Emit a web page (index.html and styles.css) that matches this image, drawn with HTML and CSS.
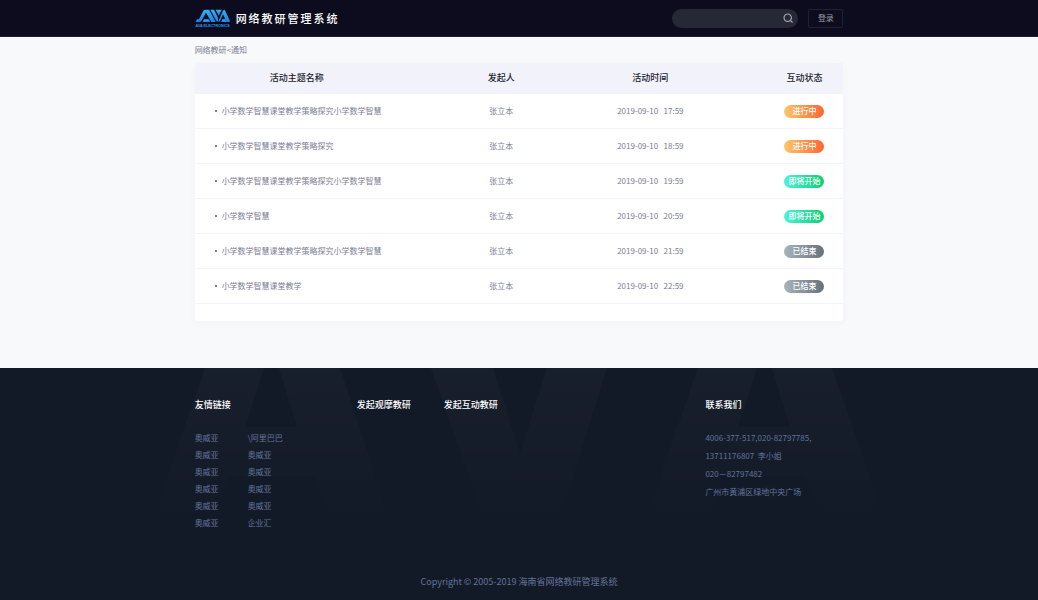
FILE: index.html
```html
<!DOCTYPE html>
<html lang="zh-CN">
<head>
  <meta charset="UTF-8">
  <meta name="viewport" content="width=device-width, initial-scale=1.0">
  <title>网络教研管理系统</title>
  <link rel="stylesheet" href="styles.css">
</head>
<body>
  <header class="header">
    <div class="container header-inner">
      <a class="brand" href="#">
        <svg class="logo" viewBox="0 0 105 57" role="img" aria-label="AVA">
          <defs>
            <linearGradient id="logoFill" x1="0" y1="0" x2="0" y2="1">
              <stop offset="0" stop-color="#2fb4f5"/>
              <stop offset="1" stop-color="#1a7fe8"/>
            </linearGradient>
          </defs>
          <g fill="url(#logoFill)">
            <path d="M2 39L6 31H12L25 5Q27 2 31 2H42L62 39H49L33 11L19 36Q17 39 13 39Z"/>
            <path d="M27 31H41L45 39H23Z"/>
            <path d="M46 2H57L69 26V34L66 39Z"/>
            <path d="M62 2H80L71 20Z"/>
            <path d="M69 39L84 5Q86 2 89 2L104 34V39H95L84 16L75 36Q73 39 69 39Z"/>
            <path d="M82 31H91L95 39H79Z"/>
          </g>
          <text class="logo-text" x="53" y="54" text-anchor="middle">AVA ELECTRONICS</text>
        </svg>
        <span class="brand-name">网络教研管理系统</span>
      </a>
      <form class="search" role="search">
        <input type="search" class="search-input" aria-label="搜索">
        <button type="button" class="search-btn" aria-label="搜索">
          <svg viewBox="0 0 10 10" width="10" height="10" fill="none" stroke="#a3a4b0" stroke-width="1.2">
            <circle cx="4.7" cy="4.7" r="3.7"/>
            <path d="M7.3 7.3L9.5 9.5"/>
          </svg>
        </button>
      </form>
      <button type="button" class="login-btn">登录</button>
    </div>
  </header>

  <main class="container main">
    <nav class="breadcrumb"><a href="#">网络教研</a>&lt;<a href="#">通知</a></nav>

    <div class="card">
      <table class="table">
        <thead>
          <tr>
            <th class="col-name">活动主题名称</th>
            <th class="col-user">发起人</th>
            <th class="col-time">活动时间</th>
            <th class="col-status">互动状态</th>
          </tr>
        </thead>
        <tbody>
          <tr>
            <td class="name">小学数学智慧课堂教学策略探究小学数学智慧</td>
            <td>张立本</td>
            <td class="time">2019-09-10   17:59</td>
            <td><span class="badge badge-doing">进行中</span></td>
          </tr>
          <tr>
            <td class="name">小学数学智慧课堂教学策略探究</td>
            <td>张立本</td>
            <td class="time">2019-09-10   18:59</td>
            <td><span class="badge badge-doing">进行中</span></td>
          </tr>
          <tr>
            <td class="name">小学数学智慧课堂教学策略探究小学数学智慧</td>
            <td>张立本</td>
            <td class="time">2019-09-10   19:59</td>
            <td><span class="badge badge-soon">即将开始</span></td>
          </tr>
          <tr>
            <td class="name">小学数学智慧</td>
            <td>张立本</td>
            <td class="time">2019-09-10   20:59</td>
            <td><span class="badge badge-soon">即将开始</span></td>
          </tr>
          <tr>
            <td class="name">小学数学智慧课堂教学策略探究小学数学智慧</td>
            <td>张立本</td>
            <td class="time">2019-09-10   21:59</td>
            <td><span class="badge badge-end">已结束</span></td>
          </tr>
          <tr>
            <td class="name">小学数学智慧课堂教学</td>
            <td>张立本</td>
            <td class="time">2019-09-10   22:59</td>
            <td><span class="badge badge-end">已结束</span></td>
          </tr>
        </tbody>
      </table>
    </div>
  </main>

  <footer class="footer">
    <!-- 页脚背景水印 -->
    <svg class="watermark" viewBox="0 0 1038 140" aria-hidden="true">
      <defs>
        <linearGradient id="fade" gradientUnits="userSpaceOnUse" x1="0" y1="0" x2="0" y2="140">
          <stop offset="0" stop-color="#fff" stop-opacity="0.024"/>
          <stop offset="1" stop-color="#fff" stop-opacity="0.002"/>
        </linearGradient>
      </defs>
      <g fill="url(#fade)">
        <path d="M205 0H264L245 59H297L279 0H340L385 139H325L314 108H229L218 139H157Z"/>
        <path d="M431 0H493L520 86L547 0H607L563 139H480Z"/>
        <path d="M698 0H757L738 59H790L772 0H832L880 139H818L806 108H723L712 139H650Z"/>
      </g>
    </svg>
    <div class="container footer-cols">
      <section>
        <h2 class="footer-title">友情链接</h2>
        <div class="links">
          <ul>
            <li><a href="#">奥威亚</a></li>
            <li><a href="#">奥威亚</a></li>
            <li><a href="#">奥威亚</a></li>
            <li><a href="#">奥威亚</a></li>
            <li><a href="#">奥威亚</a></li>
            <li><a href="#">奥威亚</a></li>
          </ul>
          <ul>
            <li><a href="#">\阿里巴巴</a></li>
            <li><a href="#">奥威亚</a></li>
            <li><a href="#">奥威亚</a></li>
            <li><a href="#">奥威亚</a></li>
            <li><a href="#">奥威亚</a></li>
            <li><a href="#">企业汇</a></li>
          </ul>
        </div>
      </section>
      <section>
        <h2 class="footer-title">发起观摩教研</h2>
      </section>
      <section>
        <h2 class="footer-title">发起互动教研</h2>
      </section>
      <section>
        <h2 class="footer-title">联系我们</h2>
        <address class="contact">
          <p>4006-377-517,020-82797785,</p>
          <p>13711176807&nbsp; 李小姐</p>
          <p>020－82797482</p>
          <p>广州市黄浦区绿地中央广场</p>
        </address>
      </section>
    </div>
    <p class="copyright">Copyright © 2005-2019 海南省网络教研管理系统</p>
  </footer>
</body>
</html>
```

FILE: styles.css
```css
* {
  box-sizing: border-box;
}
body {
  margin: 0;
  min-height: 100vh;
  display: flex;
  flex-direction: column;
  font-family: "Noto Sans CJK SC", sans-serif;
  font-size: 8px;
  line-height: 12px;
  color: #7b7c92;
  background: #f7f9fb;
}
a {
  color: inherit;
  text-decoration: none;
}
h2, p, ul {
  margin: 0;
  padding: 0;
}
ul {
  list-style: none;
}
button, input {
  font: inherit;
}
.container {
  width: 62.5%;
  margin: 0 auto;
}

/* 顶部 */
.header {
  background: #0c0c1e;
  border-bottom: 1px solid #1e2033;
}
.header-inner {
  display: flex;
  align-items: center;
  height: 36px;
}
.brand {
  display: flex;
  align-items: center;
  gap: 6px;
  margin-right: auto;
}
.logo {
  width: 35px;
  height: 19px;
}
.logo-text {
  font-family: "Liberation Sans", sans-serif;
  font-size: 11px;
  font-weight: bold;
  fill: #1e9cf5;
}
.brand-name {
  font-size: 11px;
  line-height: 16px;
  font-weight: 500;
  letter-spacing: 2px;
  color: #fff;
}
.search {
  display: flex;
  align-items: center;
  width: 126px;
  height: 19px;
  padding: 0 5px 0 10px;
  border-radius: 10px;
  background: #272836;
}
.search-input {
  flex: 1;
  min-width: 0;
  padding: 0;
  border: 0;
  outline: 0;
  background: transparent;
  color: #fff;
}
.search-btn {
  display: flex;
  padding: 0;
  border: 0;
  background: none;
}
.login-btn {
  width: 35px;
  height: 19px;
  margin-left: 10px;
  padding: 0;
  border: 1px solid #1f2030;
  border-radius: 2px;
  background: transparent;
  color: #9a9ba8;
}

/* 列表 */
.main {
  flex: 1;
}
.breadcrumb {
  padding: 7px 0;
}
.card {
  padding-bottom: 17px;
  border-radius: 3px;
  background: #fff;
  box-shadow: 0 2px 8px rgba(60, 70, 110, 0.03);
}
.table {
  width: 100%;
  table-layout: fixed;
  border-collapse: separate;
  border-spacing: 0;
  text-align: center;
}
.table th {
  height: 31px;
  padding: 0 0 1px;
  font-size: 9px;
  font-weight: 500;
  color: #1c1c2e;
  background: #f1f2fa;
}
.table th:first-child {
  border-radius: 3px 0 0 0;
}
.table th:last-child {
  border-radius: 0 3px 0 0;
}
.table td {
  height: 35px;
  padding: 0;
  border-bottom: 1px solid #f3f4f8;
}
.table .col-name {
  width: 42%;
  padding-right: 68px;
}
.col-user {
  width: 10.5%;
}
.col-time {
  width: 35.5%;
}
.col-status {
  width: 12%;
}
.table .name {
  padding-left: 20px;
  text-align: left;
}
.name::before {
  content: "";
  display: inline-block;
  width: 2px;
  height: 2px;
  margin-right: 5px;
  vertical-align: 2px;
  background: #7b7c92;
}
.time {
  white-space: pre;
}
.badge {
  display: inline-block;
  width: 40px;
  height: 13px;
  line-height: 12px;
  border-radius: 7px;
  font-weight: 500;
  color: #fff;
  vertical-align: middle;
}
.badge-doing {
  background: linear-gradient(to right, #f9c76b, #ff6632);
}
.badge-soon {
  background: linear-gradient(to right, #4ff0dc, #0bd070);
}
.badge-end {
  background: linear-gradient(to right, #a9b3bb, #66717c);
}

/* 页脚 */
.footer {
  position: relative;
  margin-top: 47px;
  padding: 29px 0 12px;
  background: #131a27;
  color: #63729a;
}
.watermark {
  position: absolute;
  top: 0;
  left: 0;
  width: 100%;
}
.footer-cols {
  position: relative;
  display: grid;
  grid-template-columns: 25% 87px 1fr 138px;
}
.footer-title {
  margin-bottom: 16px;
  font-size: 9px;
  line-height: 16px;
  font-weight: 500;
  color: #fff;
}
.links {
  display: flex;
  gap: 29px;
  line-height: 17px;
}
.contact {
  font-style: normal;
  line-height: 18px;
}
.copyright {
  position: relative;
  margin-top: 45px;
  font-size: 9px;
  text-align: center;
}
```
